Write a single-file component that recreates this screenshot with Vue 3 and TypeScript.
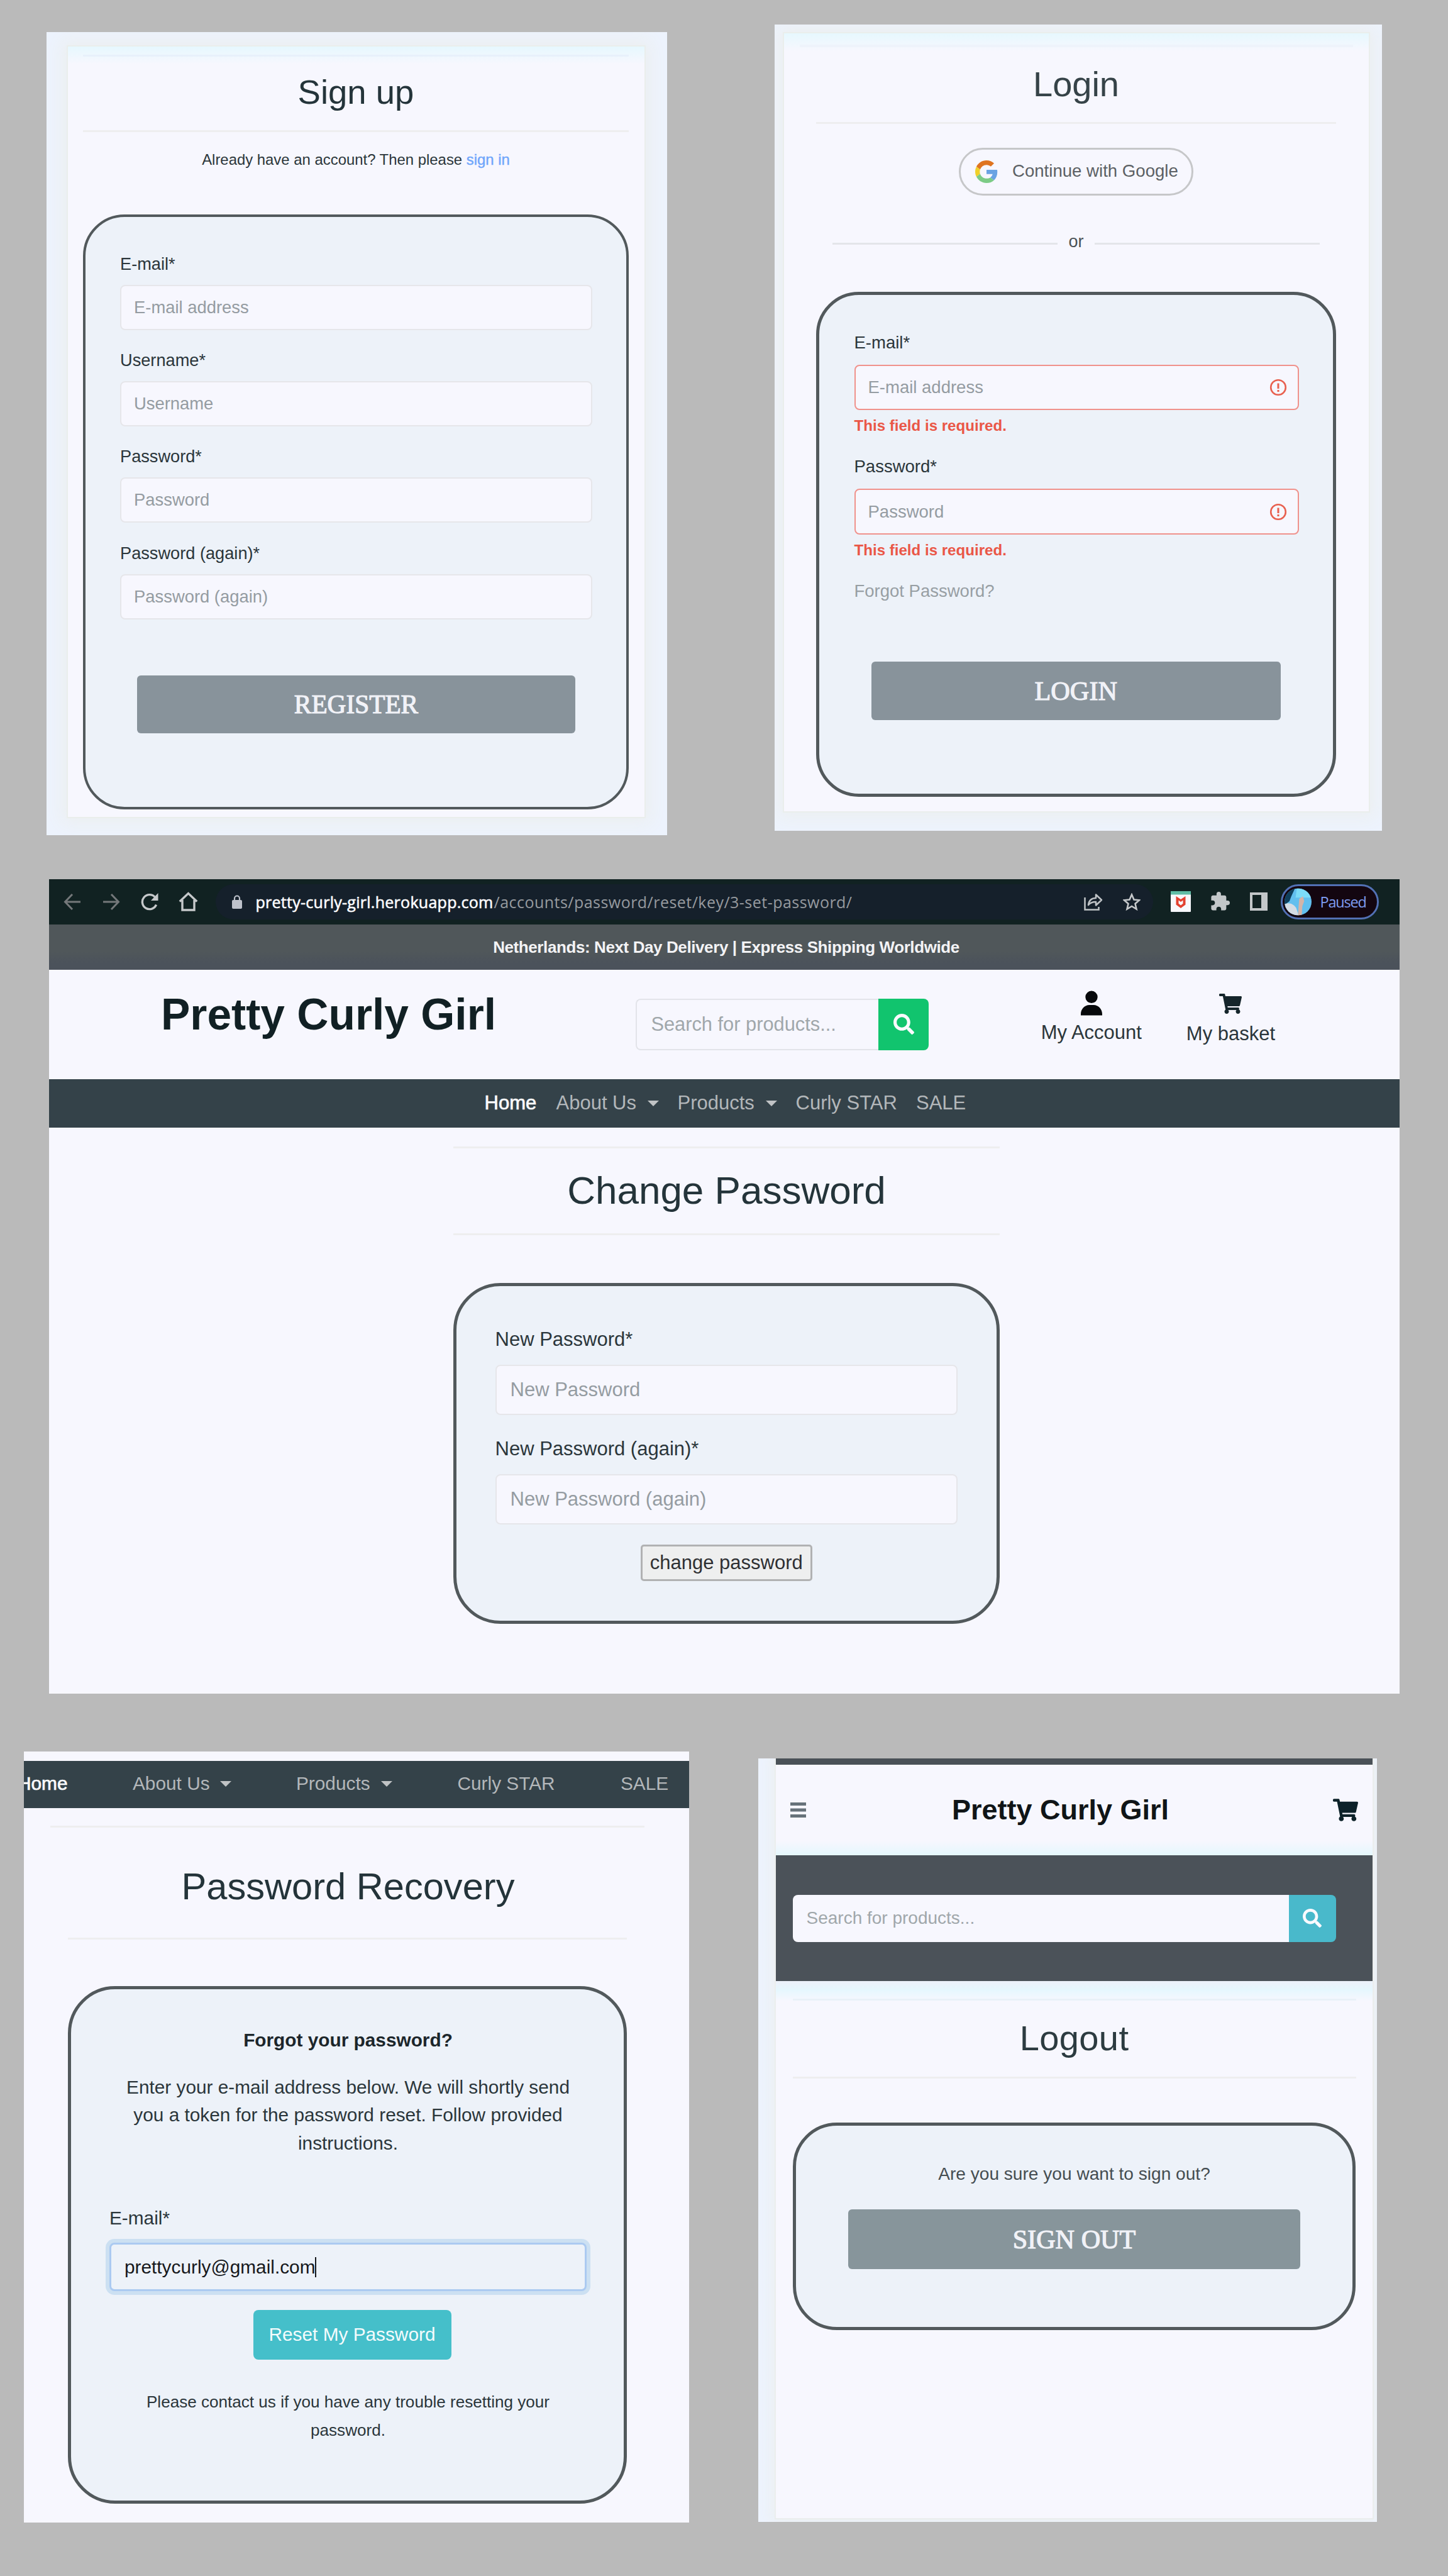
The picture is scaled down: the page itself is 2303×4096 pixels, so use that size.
<script setup lang="ts">
interface Field { label: string; placeholder: string }
interface NavItem { label: string; width: number; gap: number; caret?: boolean; active?: boolean }

const signupFields: Field[] = [
  { label: 'E-mail*', placeholder: 'E-mail address' },
  { label: 'Username*', placeholder: 'Username' },
  { label: 'Password*', placeholder: 'Password' },
  { label: 'Password (again)*', placeholder: 'Password (again)' },
]
const loginFields: Field[] = [
  { label: 'E-mail*', placeholder: 'E-mail address' },
  { label: 'Password*', placeholder: 'Password' },
]
const changeFields: Field[] = [
  { label: 'New Password*', placeholder: 'New Password' },
  { label: 'New Password (again)*', placeholder: 'New Password (again)' },
]
const desktopNav: NavItem[] = [
  { label: 'Home', width: 82.5, gap: 693, active: true },
  { label: 'About Us', width: 163.5, gap: 31.5, caret: true },
  { label: 'Products', width: 158, gap: 29.5, caret: true },
  { label: 'Curly STAR', width: 163, gap: 30 },
  { label: 'SALE', width: 80, gap: 28.5 },
]
const tabletNav: NavItem[] = [
  { label: 'Home', width: 79.5, gap: -10, active: true },
  { label: 'About Us', width: 157, gap: 103.5, caret: true },
  { label: 'Products', width: 152.5, gap: 103, caret: true },
  { label: 'Curly STAR', width: 157, gap: 104 },
  { label: 'SALE', width: 80, gap: 102.5 },
]

const searchPath = 'M505 442.7L405.3 343c-4.5-4.5-10.6-7-17-7H372c27.6-35.3 44-79.7 44-128C416 93.1 322.9 0 208 0S0 93.1 0 208s93.1 208 208 208c48.3 0 92.7-16.4 128-44v16.3c0 6.4 2.5 12.5 7 17l99.7 99.7c9.4 9.4 24.6 9.4 33.9 0l28.3-28.3c9.4-9.4 9.4-24.6.1-34zM208 336c-70.7 0-128-57.2-128-128 0-70.7 57.2-128 128-128 70.7 0 128 57.2 128 128 0 70.7-57.2 128-128 128z'
const cartPath = 'M528.12 301.319l47.273-208C578.806 78.301 567.391 64 551.99 64H159.208l-9.166-44.81C147.758 8.021 137.93 0 126.529 0H24C10.745 0 0 10.745 0 24v16c0 13.255 10.745 24 24 24h69.883l70.248 343.435C147.325 417.1 136 435.222 136 456c0 30.928 25.072 56 56 56s56-25.072 56-56c0-15.674-6.447-29.835-16.824-40h209.647C430.447 426.165 424 440.326 424 456c0 30.928 25.072 56 56 56s56-25.072 56-56c0-22.172-12.888-41.332-31.579-50.405l5.517-24.276c3.413-15.018-8.002-29.319-23.403-29.319H218.117l-6.545-32h293.145c11.206 0 20.92-7.754 23.403-18.681z'
</script>

<template>
  <main class="board">
    <div class="row row-top">
      <section class="panel signup">
        <div class="card">
          <hr class="rule first">
          <h1>Sign up</h1>
          <hr class="rule">
          <p class="hint">Already have an account? Then please <a>sign in</a></p>
          <form class="box">
            <div v-for="f in signupFields" :key="f.label" class="field">
              <label>{{ f.label }}</label>
              <div class="input">{{ f.placeholder }}</div>
            </div>
            <div class="submit">REGISTER</div>
          </form>
        </div>
      </section>

      <section class="panel login">
        <div class="card">
          <hr class="rule first">
          <h1>Login</h1>
          <hr class="rule">
          <div class="google">
            <svg viewBox="0 0 48 48" width="36" height="36">
              <path fill="#df7420" d="M24 9.500c3.540 0 6.710 1.220 9.210 3.600l6.850-6.850C35.900 2.380 30.470 0 24 0 14.620 0 6.510 5.380 2.560 13.220l7.980 6.190C12.430 13.720 17.740 9.500 24 9.500z" />
              <path fill="#6aa3e3" d="M46.980 24.550c0-1.570-.15-3.090-.38-4.550H24v9.020h12.940c-.58 2.960-2.260 5.480-4.780 7.180l7.730 6c4.510-4.180 7.090-10.360 7.090-17.650z" />
              <path fill="#f0d02a" d="M10.530 28.590c-.48-1.450-.76-2.990-.76-4.590s.27-3.140.76-4.590l-7.980-6.190C.92 16.460 0 20.120 0 24c0 3.880.92 7.540 2.560 10.780l7.970-6.190z" />
              <path fill="#7ccb86" d="M24 48c6.480 0 11.930-2.130 15.890-5.810l-7.730-6c-2.150 1.450-4.920 2.300-8.160 2.300-6.260 0-11.570-4.220-13.470-9.910l-7.980 6.190C6.510 42.620 14.620 48 24 48z" />
            </svg>
            <span>Continue with Google</span>
          </div>
          <div class="or"><i /><span>or</span><i /></div>
          <form class="box">
            <div v-for="f in loginFields" :key="f.label" class="field">
              <label>{{ f.label }}</label>
              <div class="input invalid">
                <span>{{ f.placeholder }}</span>
                <svg viewBox="0 0 28 28" width="28" height="28" fill="none" stroke="#e8604f" stroke-width="2.600">
                  <circle cx="14" cy="14" r="11.800" />
                  <path d="M14 7.500v8.500M14 18v3" stroke-width="3" />
                </svg>
              </div>
              <strong class="error">This field is required.</strong>
            </div>
            <a class="forgot">Forgot Password?</a>
            <div class="submit">LOGIN</div>
          </form>
        </div>
      </section>
    </div>

    <section class="panel change">
      <div class="chrome">
        <svg class="back" viewBox="0 0 28 28" width="28" height="28" fill="none" stroke="#74787a" stroke-width="3"><path d="M27 14H3M14 2L2.500 14 14 26" /></svg>
        <svg class="forward" viewBox="0 0 28 28" width="28" height="28" fill="none" stroke="#74787a" stroke-width="3"><path d="M1 14h24M14 2l11.500 12L14 26" /></svg>
        <svg class="reload" viewBox="0 0 28 28" width="28" height="28"><path d="M24.500 18.500A11.500 11.500 0 1 1 22.500 6.500" fill="none" stroke="#c6c9cb" stroke-width="3.400" /><path d="M27.500 0v12H16z" fill="#c6c9cb" /></svg>
        <svg class="home" viewBox="0 0 31 31" width="31" height="31" fill="none" stroke="#c6c9cb" stroke-width="3.400"><path d="M1.800 15.500L15.500 2.500l13.700 13M6 13v16h19V13" /></svg>
        <div class="address">
          <svg viewBox="0 0 16 22" width="16" height="22"><rect y="8" width="16" height="14" rx="2" fill="#bdc1ca" /><path d="M4 9V5.500a4 4 0 0 1 8 0V9" fill="none" stroke="#bdc1ca" stroke-width="2.200" /></svg>
          <b>pretty-curly-girl.herokuapp.com</b><span>/accounts/password/reset/key/3-set-password/</span>
          <svg class="share" viewBox="0 0 30 28" width="30" height="28" fill="none" stroke="#bfc3c6" stroke-width="2.500"><path d="M1.500 7v19.500h22V22" /><path d="M7 19C8 11 13 8 19 8V2.500l9 8.500-9 8.500v-5.500c-5 0-9 1-12 5z" stroke-linejoin="round" /></svg>
          <svg class="star" viewBox="0 0 28 28" width="28" height="28" fill="none" stroke="#c6c9cb" stroke-width="2.600"><path d="M14 2.500l3.500 8 8.500.8-6.500 5.700 2 8.500-7.500-4.500-7.500 4.500 2-8.500L2 11.300l8.500-.8z" /></svg>
        </div>
        <svg class="mcafee" viewBox="0 0 32 33" width="32" height="33"><rect width="32" height="33" rx="1" fill="#f8f8fc" /><rect width="32" height="5.500" fill="#5fbda6" /><path d="M8.500 8l7.500 5 7.500-5v13.500L16 27l-7.500-5.500z" fill="#e2402f" /><path d="M12.500 14.500L16 17l3.500-2.500v5.300L16 22.500l-3.500-2.700z" fill="#f8f8fc" /></svg>
        <svg class="puzzle" viewBox="1 1 22 22" width="31" height="31" fill="#c3c7c9"><path d="M20.500 11H19V7c0-1.100-.9-2-2-2h-4V3.500a2.500 2.500 0 0 0-5 0V5H4c-1.100 0-2 .9-2 2v3.800h1.500a2.700 2.700 0 0 1 0 5.400H2V20c0 1.100.9 2 2 2h3.800v-1.500a2.700 2.700 0 0 1 5.400 0V22H17c1.100 0 2-.9 2-2v-4h1.500a2.500 2.500 0 0 0 0-5z" /></svg>
        <svg class="sidebar" viewBox="0 0 28 29" width="28" height="29"><path fill="#c3c7c9" fill-rule="evenodd" d="M0 0h28v29H0zM4 4v21h14V4z" /></svg>
        <div class="profile">
          <svg viewBox="0 0 44 44" width="43" height="44">
            <defs><clipPath id="face"><circle cx="22" cy="22" r="22" /></clipPath></defs>
            <g clip-path="url(#face)">
              <rect width="44" height="44" fill="#62bfee" />
              <path d="M0 0h17l-6 13-3 8-8 6z" fill="#0f3f5c" />
              <path d="M20 0h24v15H18z" fill="#7cdcf8" />
              <path d="M0 26c8-4 15 0 19 6l4 12H0z" fill="#d4dce4" />
              <path d="M24 17l6-4 2 8-3 8-1 15h-6l1-16z" fill="#d3b4a8" />
            </g>
          </svg>
          <span>Paused</span>
        </div>
      </div>
      <div class="notice">Netherlands: Next Day Delivery | Express Shipping Worldwide</div>
      <header class="shop-head">
        <div class="brand">Pretty Curly Girl</div>
        <div class="search">
          <div class="query">Search for products...</div>
          <div class="go"><svg viewBox="0 0 512 512" width="33" height="33" fill="#fafafe"><path :d="searchPath" /></svg></div>
        </div>
        <div class="link account">
          <svg viewBox="0 0 448 512" width="34" height="40" fill="#07090b"><path d="M224 256a128 128 0 1 0 0-256 128 128 0 1 0 0 256zm-45.700 40C79.800 296 0 383.800 0 482.300V512h448v-29.700c0-98.500-79.800-186.300-178.300-186.300z" /></svg>
          <span>My Account</span>
        </div>
        <div class="link basket">
          <svg viewBox="0 0 576 512" width="36" height="32" fill="#15252b"><path :d="cartPath" /></svg>
          <span>My basket</span>
        </div>
      </header>
      <nav class="nav">
        <div v-for="n in desktopNav" :key="n.label" class="nav-item" :class="{ active: n.active }" :style="{ width: n.width + 'px', marginLeft: n.gap + 'px' }">
          {{ n.label }}<i v-if="n.caret" class="caret" />
        </div>
      </nav>
      <div class="body">
        <hr class="rule first">
        <h1>Change Password</h1>
        <hr class="rule">
        <form class="box">
          <div v-for="f in changeFields" :key="f.label" class="field">
            <label>{{ f.label }}</label>
            <div class="input">{{ f.placeholder }}</div>
          </div>
          <div class="plain">change password</div>
        </form>
      </div>
    </section>

    <div class="row row-bottom">
      <section class="panel recovery">
        <nav class="nav">
          <div v-for="n in tabletNav" :key="n.label" class="nav-item" :class="{ active: n.active }" :style="{ width: n.width + 'px', marginLeft: n.gap + 'px' }">
            {{ n.label }}<i v-if="n.caret" class="caret" />
          </div>
        </nav>
        <div class="body">
          <hr class="rule first">
          <h1>Password Recovery</h1>
          <hr class="rule">
          <form class="box">
            <strong>Forgot your password?</strong>
            <p class="intro">Enter your e-mail address below. We will shortly send<br>you a token for the password reset. Follow provided<br>instructions.</p>
            <label>E-mail*</label>
            <div class="input focused">prettycurly@gmail.com<i /></div>
            <div class="reset">Reset My Password</div>
            <p class="help">Please contact us if you have any trouble resetting your<br>password.</p>
          </form>
        </div>
      </section>

      <section class="panel logout">
        <div class="phone">
          <div class="strip" />
          <header class="phone-head">
            <svg class="menu" viewBox="0 0 25 24" width="25" height="24" fill="#67727a"><path d="M0 0h25v5H0zM0 9.500h25v5H0zM0 19h25v5H0z" /></svg>
            <div class="brand">Pretty Curly Girl</div>
            <svg class="cart" viewBox="0 0 576 512" width="40" height="36" fill="#0d2229"><path :d="cartPath" /></svg>
          </header>
          <div class="search-band">
            <div class="search">
              <div class="query">Search for products...</div>
              <div class="go"><svg viewBox="0 0 512 512" width="30" height="30" fill="#fafafe"><path :d="searchPath" /></svg></div>
            </div>
          </div>
          <div class="body">
            <hr class="rule first">
            <h1>Logout</h1>
            <hr class="rule">
            <form class="box">
              <p>Are you sure you want to sign out?</p>
              <div class="submit">SIGN OUT</div>
            </form>
          </div>
        </div>
      </section>
    </div>
  </main>
</template>

<style>
body { margin: 0; background: #bababa; }
</style>

<style scoped>
* { box-sizing: border-box; }
h1, p, hr { margin: 0; padding: 0; }
svg { display: block; flex: none; }

.board {
  width: 2303px;
  height: 4096px;
  overflow: hidden;
  display: flex;
  flex-direction: column;
  background: #bababa;
  font-family: "Liberation Sans", Arial, sans-serif;
  color: #2b363b;
  white-space: nowrap;
}
.row { display: flex; align-items: flex-start; flex: none; }
.row-top { height: 1398px; }
.row-bottom { margin-top: 92px; }
.panel { flex: none; overflow: hidden; background: #f7f7fe; }
h1 { font-weight: 400; color: #24343a; text-align: center; }
.rule { width: 100%; height: 3px; border: 0; background: #eeeeef; flex: none; }
.box {
  flex: none;
  display: flex;
  flex-direction: column;
  background: #edf2f9;
  border: 5px solid #52595c;
}
label { display: block; }
.input {
  display: flex;
  align-items: center;
  background: #f7f7fe;
  color: #959ca2;
  border: 2px solid #e6e6ea;
  border-radius: 8px;
}
.submit {
  display: flex;
  align-items: center;
  justify-content: center;
  background: #88939b;
  border-radius: 6px;
  color: #f1f2f7;
  font-family: "Liberation Serif", "Times New Roman", serif;
  font-size: 41.300px;
  -webkit-text-stroke: 1.200px #f1f2f7;
}
.body { display: flex; flex-direction: column; align-items: center; }

/* Sign up and login cards */
.signup, .login { background: #edf3fd; }
.card {
  display: flex;
  flex-direction: column;
  align-items: center;
  background: linear-gradient(#e5f8fe, #f7f7fe 30px);
  box-shadow: inset 0 0 0 2px #eaeeec, 0 0 26px 8px #eceff0;
}
.card .rule.first { background: #e8f1fb; }

.signup { width: 986.500px; height: 1277px; margin: 50.600px 0 0 74px; }
.signup .card { width: 921px; height: 1229px; margin: 21px 0 0 31.500px; }
.signup .rule { width: 868px; margin-top: 30px; }
.signup .rule.first { margin-top: 15px; }
.signup h1 { font-size: 54.500px; line-height: 60px; margin-top: 27px; }
.hint { font-size: 23.900px; line-height: 30px; margin-top: 29px; }
.hint a { color: #6fa6fb; -webkit-text-stroke: .4px #6fa6fb; }
.signup .box { width: 868px; height: 946px; margin-top: 72px; padding: 60px 54px 0 55px; border-radius: 66px; border-width: 4.500px; }
.signup .field { font-size: 27.200px; margin-bottom: 33.400px; }
.signup label { line-height: 30px; }
.signup .input { height: 72px; margin-top: 18px; padding-left: 20px; font-size: 27.400px; }
.signup .submit { height: 92px; margin: 56px 27px 0; }

.login { width: 966px; height: 1281.500px; margin: 39px 0 0 171.500px; }
.login .card { width: 934px; height: 1241px; margin: 12px 0 0 12.500px; }
.login .rule { width: 827px; margin-top: 30px; }
.login .rule.first { width: 880px; height: 4px; margin-top: 20px; background: #eef3fb; }
.login h1 { font-size: 56px; line-height: 60px; margin-top: 28.500px; color: #364348; }
.google {
  display: flex;
  align-items: center;
  width: 373px;
  height: 76px;
  margin-top: 38.500px;
  padding-left: 23px;
  border: 3px solid #c6c7c9;
  border-radius: 38px;
  font-size: 27.600px;
  line-height: 30px;
  color: #5c6165;
}
.google span { margin: -3px 0 0 23px; }
.or { display: flex; justify-content: space-between; width: 775px; margin-top: 58px; font-size: 27px; line-height: 30px; color: #4a5256; }
.or i { width: 358px; height: 3px; margin-top: 17px; background: #e4e5ea; }
.login .box { width: 827px; height: 802.500px; margin-top: 65px; padding: 60.500px 54px 0 55.500px; border-radius: 68px; }
.login .field { font-size: 27.500px; margin-bottom: 35.300px; }
.login label { line-height: 30px; }
.login .input { height: 72.500px; margin-top: 20px; padding: 0 17px 0 20px; justify-content: space-between; }
.login .invalid { border: 2px solid #f0928c; }
.error { display: block; margin-top: 10px; font-size: 24.100px; line-height: 30px; color: #ea5747; }
.forgot { font-size: 27.500px; line-height: 30px; color: #989fa4; }
.login .submit { height: 93px; margin: 96.500px 29px 0 27px; font-size: 42.300px; }

/* Change password in a browser window */
.change { width: 2148px; height: 1295px; margin-left: 77.500px; }
.chrome { display: flex; align-items: center; height: 71.500px; background: #112222; }
.back { margin-left: 23px; }
.forward { margin-left: 34px; }
.reload { margin-left: 33px; }
.home { margin-left: 32px; }
.address {
  flex: none;
  display: flex;
  align-items: center;
  width: 1491.500px;
  height: 56px;
  margin-left: 28px;
  padding: 0 20px 0 26px;
  border-radius: 28px;
  background: #15202b;
  font-family: "Open Sans", "Noto Sans", sans-serif;
  font-size: 25px;
  color: #969a9f;
}
.address b { width: 379px; margin-left: 22px; font-weight: 500; letter-spacing: .270px; color: #fbfbfd; -webkit-text-stroke: .6px #fbfbfd; }
.address span { letter-spacing: .470px; }
.share { margin-left: auto; }
.star { margin-left: 32px; }
.mcafee { margin-left: 28px; }
.puzzle { margin-left: 31px; }
.sidebar { margin-left: 32px; }
.profile {
  flex: none;
  display: flex;
  align-items: center;
  width: 156px;
  height: 56px;
  margin-left: 20.500px;
  padding-left: 3px;
  border: 3px solid #5270b4;
  border-radius: 28px;
  background: #130610;
  color: #7f9df2;
  font-family: "Open Sans", "Noto Sans", sans-serif;
  font-size: 23.500px;
}
.profile span { margin-left: 14px; letter-spacing: -1.200px; }
.notice {
  height: 72.300px;
  background: linear-gradient(#50575a 60%, #4b525b 85%);
  color: #f3f3f5;
  text-align: center;
  font-weight: 700;
  font-size: 26px;
  letter-spacing: -.4px;
  line-height: 72px;
  padding-left: 7px;
}
.shop-head { display: flex; align-items: flex-start; height: 174.300px; }
.brand { font-weight: 700; color: #112024; }
.shop-head .brand { flex: none; width: 755.400px; margin: 30.800px 0 0 178.500px; font-size: 69.500px; line-height: 80px; }
.search { display: flex; }
.query { flex: 1; display: flex; align-items: center; background: #f7f7fe; color: #a0a7ab; }
.go { display: flex; align-items: center; justify-content: center; }
.shop-head .search { flex: none; width: 466px; height: 82px; margin-top: 46.200px; font-size: 30.800px; }
.shop-head .query { border: 2px solid #e3e4ea; border-right: 0; border-radius: 8px 0 0 8px; padding-left: 22px; }
.shop-head .go { width: 80px; background: #11c46e; border-radius: 0 8px 8px 0; }
.link { display: flex; flex-direction: column; align-items: center; flex: none; width: 180px; font-size: 31px; line-height: 36px; }
.account { margin: 33px 0 0 168.400px; }
.account span { margin-top: 9px; }
.basket { margin: 38px 0 0 41.700px; }
.basket span { margin-top: 14px; }
.nav { display: flex; align-items: center; background: #344249; color: #b3b7ba; }
.nav-item { flex: none; display: flex; align-items: center; justify-content: space-between; }
.nav-item.active { color: #fafafc; -webkit-text-stroke: .7px #fafafc; }
.caret { width: 0; height: 0; border: 9.500px solid transparent; border-top: 9px solid #c0c3c5; border-bottom: 0; }
.change .nav { height: 76.600px; font-size: 31px; line-height: 36px; }
.change .body { padding-left: 8px; }
.change .rule { width: 869.500px; margin-top: 32.700px; }
.change .rule.first { margin-top: 30.500px; }
.change h1 { font-size: 62px; line-height: 70px; margin-top: 31.700px; }
.change .box { width: 869px; height: 541.500px; margin-top: 76.500px; padding: 67px 62px 0 61.500px; border-radius: 75px; }
.change .field { font-size: 31px; margin-bottom: 36px; }
.change label { line-height: 36px; }
.change .input { height: 80.200px; margin-top: 22px; padding-left: 22px; }
.plain {
  align-self: center;
  width: 273px;
  height: 57.500px;
  margin-top: -4px;
  border: 3px solid #b1b2b3;
  border-radius: 5px;
  background: #eeefef;
  color: #2e3033;
  font-size: 31px;
  line-height: 51px;
  text-align: center;
}

/* Password recovery */
.recovery { width: 1058px; height: 1226px; margin-left: 38px; padding-top: 14.600px; font-size: 29.800px; }
.recovery .nav { height: 75px; padding-bottom: 2px; line-height: 36px; }
.recovery .body { padding-right: 29px; }
.recovery .rule { width: 889px; margin-top: 46px; }
.recovery .rule.first { width: 945px; margin-top: 28.700px; }
.recovery h1 { font-size: 59.600px; line-height: 70px; margin-top: 59px; padding-left: 2px; }
.recovery .box { width: 889px; height: 823px; margin-top: 74px; padding: 58.500px 59px 0 61px; border-width: 5.600px; border-radius: 75px; }
.recovery strong { text-align: center; line-height: 44.750px; color: #1c262b; }
.intro { margin-top: 30px; line-height: 44.750px; text-align: center; }
.recovery label { margin-top: 78.400px; line-height: 36px; }
.focused {
  height: 77.500px;
  margin-top: 20.800px;
  padding-left: 21px;
  border: 3px solid #abcaf1;
  box-shadow: 0 0 0 6px #cce0f2;
  background: #edf2f9;
  color: #16181c;
}
.focused i { width: 2px; height: 32px; background: #16181c; }
.reset {
  align-self: center;
  width: 315px;
  height: 79px;
  margin: 30px 0 0 13px;
  border-radius: 8px;
  background: #45bfca;
  color: #f3fbfc;
  line-height: 77px;
  text-align: center;
}
.help { margin-top: 44.600px; font-size: 26.100px; line-height: 44.900px; text-align: center; }

/* Phone-sized logout */
.logout { width: 984px; height: 1214.300px; margin: 11px 0 0 110px; background: #edf3fd; }
.phone { width: 949px; height: 1208px; margin-left: 28px; background: #f7f7fe; box-shadow: 0 0 20px 6px #eceff0, 0 0 0 2px #e9ecea; }
.strip { height: 9.500px; background: #4a5157; }
.phone-head { display: flex; align-items: center; height: 144.400px; background: linear-gradient(transparent 84%, #e5f7fd); }
.menu { margin-left: 23px; }
.phone-head .brand { margin-left: 232px; font-size: 45px; line-height: 56px; color: #101517; }
.cart { margin: 0 23px 0 auto; }
.search-band { height: 200px; padding: 62.700px 0 0 26.500px; background: #4b5259; }
.search-band .search { width: 864px; height: 75px; font-size: 28px; }
.search-band .query { padding-left: 22px; border-radius: 8px 0 0 8px; }
.search-band .go { width: 74.500px; background: #49b9cb; border-radius: 0 8px 8px 0; }
.logout .body { background: linear-gradient(#edf1fa, #e6f7fe 14px, #f7f7fe 32px); }
.logout .rule { width: 896px; margin-top: 31.700px; }
.logout .rule.first { margin-top: 28.500px; background: #e9f1f8; }
.logout h1 { font-size: 56px; line-height: 60px; letter-spacing: .4px; margin-top: 29.300px; color: #2c3b40; }
.logout .box { width: 895px; height: 330px; margin-top: 69.200px; padding-top: 59.600px; align-items: center; border-radius: 70px; }
.logout p { font-size: 28.100px; line-height: 36px; color: #454d51; }
.logout .submit { width: 719px; height: 94.500px; margin-top: 38.300px; background: #87959b; font-size: 42.200px; }
</style>
